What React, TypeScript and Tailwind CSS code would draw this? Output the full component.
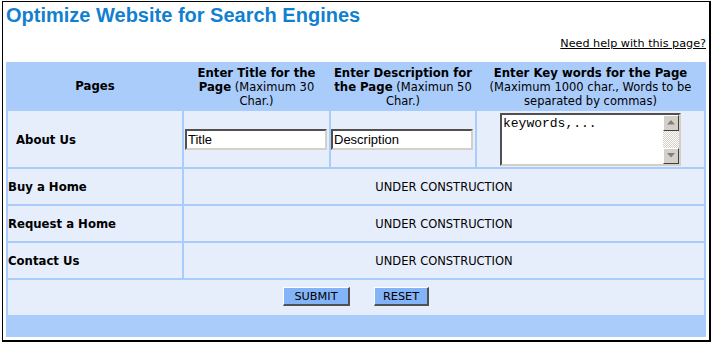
import React from "react";

const cell = "bg-[#e6eefc]";
const inset = "border-2 border-t-[#505050] border-l-[#505050] border-b-[#d4d0c8] border-r-[#d4d0c8] bg-white";
const bold = "font-bold text-[11.7px]";

function ScrollArrow({ down }: { down?: boolean }) {
  return (
    <div className="h-[16px] w-[16px] flex items-center justify-center bg-[#d4d0c8] border border-t-white border-l-white border-b-[#404040] border-r-[#404040]">
      <svg width="8" height="5" viewBox="0 0 8 5">
        {down ? <polygon points="0,0 8,0 4,4.5" fill="#808080" /> : <polygon points="4,0 8,4.5 0,4.5" fill="#808080" />}
      </svg>
    </div>
  );
}

function Btn({ label, w }: { label: string; w: string }) {
  return (
    <button className={`${w} h-[19px] bg-[#84b4f8] text-[11.3px] leading-[13px] text-black border-t border-l border-t-white border-l-white border-b-2 border-r-2 border-b-[#505050] border-r-[#505050] font-['DejaVu_Sans',sans-serif]`}>
      {label}
    </button>
  );
}

export default function App() {
  const rows = ["Buy a Home", "Request a Home", "Contact Us"];

  return (
    <div className="w-[713px] h-[345px] bg-white overflow-hidden font-['DejaVu_Sans',sans-serif] text-[11.5px] leading-[13px] text-black">
      <div className="ml-[2px] mt-[1px] w-[709px] h-[341px] border-l border-t border-r-2 border-b-2 border-black px-[3px] pt-[2px]">
        <h1 className="text-[20px] leading-[23px] font-bold text-[#1280d0] font-['Liberation_Sans',Arial,sans-serif]">
          Optimize Website for Search Engines
        </h1>
        <div className="mt-[10px] text-right text-[11.2px]">
          <a href="#" className="underline text-black">Need help with this page?</a>
        </div>

        {/* table */}
        <div className="mt-[12px] grid grid-cols-[174px_145px_144px_227px] gap-[2px] p-[2px] bg-[#aaccfa]">
          <div className={`h-[45px] flex items-center justify-center ${bold}`}>Pages</div>
          <div className="h-[45px] flex items-center justify-center text-center leading-[14px] whitespace-nowrap">
            <div>
              <b className={bold}>Enter Title for the</b>
              <br />
              <b className={bold}>Page</b> (Maximum 30
              <br />
              Char.)
            </div>
          </div>
          <div className="h-[45px] flex items-center justify-center text-center leading-[14px] whitespace-nowrap">
            <div>
              <b className={bold}>Enter Description for</b>
              <br />
              <b className={bold}>the Page</b> (Maximun 50
              <br />
              Char.)
            </div>
          </div>
          <div className="h-[45px] flex items-center justify-center text-center leading-[14px] whitespace-nowrap">
            <div>
              <b className={bold}>Enter Key words for the Page</b>
              <br />
              (Maximum 1000 char., Words to be
              <br />
              separated by commas)
            </div>
          </div>

          {/* About Us */}
          <div className={`${cell} h-[56px] flex items-center pl-[8px] pt-[2px] ${bold}`}>About Us</div>
          <div className={`${cell} flex items-center`}>
            <input
              defaultValue="Title"
              className={`${inset} ml-px w-[142px] h-[21px] px-[1px] outline-none text-[13px] font-['Liberation_Sans',Arial,sans-serif]`}
            />
          </div>
          <div className={`${cell} flex items-center`}>
            <input
              defaultValue="Description"
              className={`${inset} w-[142px] h-[21px] px-[1px] outline-none text-[13px] font-['Liberation_Sans',Arial,sans-serif]`}
            />
          </div>
          <div className={`${cell} flex items-center justify-center`}>
            <div className={`${inset} w-[181px] h-[53px] flex`}>
              <textarea
                defaultValue="keywords,..."
                className="flex-1 resize-none outline-none border-0 p-[1px] bg-white overflow-hidden text-[13px] leading-[15px] font-['Liberation_Mono','Courier_New',monospace]"
              />
              <div className="w-[16px] flex flex-col">
                <ScrollArrow />
                <div className="flex-1 bg-[image:repeating-conic-gradient(#d4d0c8_0%_25%,#ffffff_0%_50%)] bg-[length:2px_2px]" />
                <ScrollArrow down />
              </div>
            </div>
          </div>

          {rows.map((r) => (
            <React.Fragment key={r}>
              <div className={`${cell} h-[35px] flex items-center pt-[2px] ${bold}`}>{r}</div>
              <div className={`${cell} col-span-3 flex items-center justify-center pt-[2px]`}>UNDER CONSTRUCTION</div>
            </React.Fragment>
          ))}

          <div className={`${cell} col-span-4 h-[35px] flex items-center justify-center gap-[24px] pb-[2px]`}>
            <Btn label="SUBMIT" w="w-[67px]" />
            <Btn label="RESET" w="w-[55px]" />
          </div>
          <div className="col-span-4 h-[18px]" />
        </div>
      </div>
    </div>
  );
}
